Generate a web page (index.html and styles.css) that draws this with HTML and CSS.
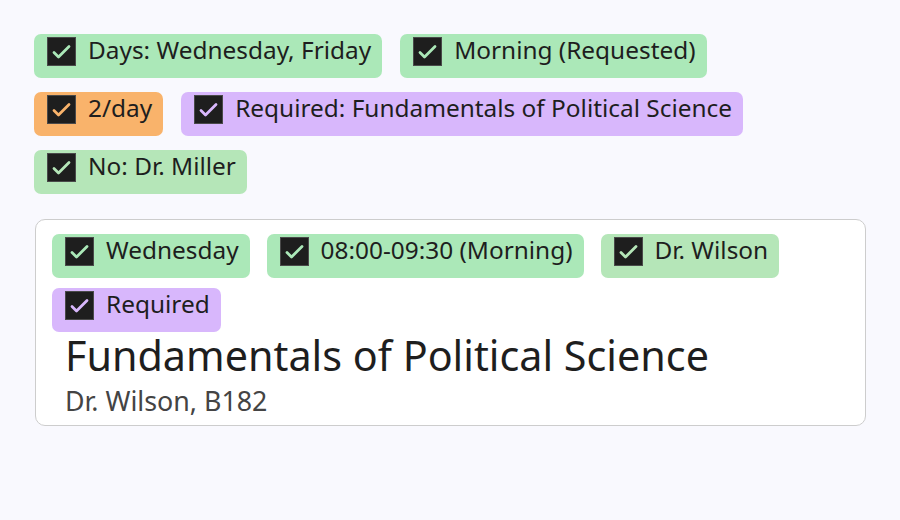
FILE: index.html
```html
<!DOCTYPE html>
<html>
<head>
<meta charset="utf-8">
<link rel="stylesheet" href="styles.css">
</head>
<body>
<div class="page">
  <div class="chips outer">
    <span class="chip green"><svg class="box" viewBox="0 0 29 29"><rect x="0.5" y="0.5" width="28" height="28"/><path d="M7 15.5 L11.5 20 L22 9.5"/></svg><span class="label">Days: Wednesday, Friday</span></span>
    <span class="chip green"><svg class="box" viewBox="0 0 29 29"><rect x="0.5" y="0.5" width="28" height="28"/><path d="M7 15.5 L11.5 20 L22 9.5"/></svg><span class="label">Morning (Requested)</span></span>
    <span class="chip orange"><svg class="box" viewBox="0 0 29 29"><rect x="0.5" y="0.5" width="28" height="28"/><path d="M7 15.5 L11.5 20 L22 9.5"/></svg><span class="label">2/day</span></span>
    <span class="chip purple"><svg class="box" viewBox="0 0 29 29"><rect x="0.5" y="0.5" width="28" height="28"/><path d="M7 15.5 L11.5 20 L22 9.5"/></svg><span class="label">Required: Fundamentals of Political Science</span></span>
    <span class="chip green2"><svg class="box" viewBox="0 0 29 29"><rect x="0.5" y="0.5" width="28" height="28"/><path d="M7 15.5 L11.5 20 L22 9.5"/></svg><span class="label">No: Dr. Miller</span></span>
  </div>
  <div class="card">
    <div class="chips inner">
      <span class="chip green"><svg class="box" viewBox="0 0 29 29"><rect x="0.5" y="0.5" width="28" height="28"/><path d="M7 15.5 L11.5 20 L22 9.5"/></svg><span class="label">Wednesday</span></span>
      <span class="chip green"><svg class="box" viewBox="0 0 29 29"><rect x="0.5" y="0.5" width="28" height="28"/><path d="M7 15.5 L11.5 20 L22 9.5"/></svg><span class="label">08:00-09:30 (Morning)</span></span>
      <span class="chip green2"><svg class="box" viewBox="0 0 29 29"><rect x="0.5" y="0.5" width="28" height="28"/><path d="M7 15.5 L11.5 20 L22 9.5"/></svg><span class="label">Dr. Wilson</span></span>
      <span class="chip purple"><svg class="box" viewBox="0 0 29 29"><rect x="0.5" y="0.5" width="28" height="28"/><path d="M7 15.5 L11.5 20 L22 9.5"/></svg><span class="label">Required</span></span>
    </div>
    <div class="course">
      <div class="title">Fundamentals of Political Science</div>
      <div class="sub">Dr. Wilson, B182</div>
    </div>
  </div>
</div>
</body>
</html>
```
FILE: styles.css
```css
html, body {
  margin: 0;
  padding: 0;
  background: #f9f9fe;
}
body {
  font-family: "Noto Sans", "Open Sans", sans-serif;
  color: #1e1e1e;
}
.page {
  padding: 34px 34px 0 34px;
  width: 832px;
}
.chips {
  display: flex;
  flex-wrap: wrap;
  column-gap: 18px;
  row-gap: 14px;
}
.chips.outer {
  width: 770px;
}
.chip {
  display: inline-flex;
  align-items: flex-start;
  height: 44px;
  box-sizing: border-box;
  padding: 3px 11px 0 13px;
  border-radius: 7px;
  gap: 12px;
}
.box {
  width: 29px;
  height: 29px;
  flex: none;
}
.box rect {
  fill: #1e1e1e;
  stroke: #4a4a4a;
  stroke-width: 1;
}
.box path {
  fill: none;
  stroke-width: 2.8;
  stroke-linecap: round;
  stroke-linejoin: round;
}
.label {
  font-size: 24.4px;
  line-height: 25px;
  white-space: nowrap;
}
.green { background: #abe8b8; }
.green .box path { stroke: #abe8b8; }
.green2 { background: #b5e6b8; }
.green2 .box path { stroke: #b5e6b8; }
.orange { background: #f9b36b; }
.orange .box path { stroke: #f9b36b; }
.purple { background: #d8b7fc; }
.purple .box path { stroke: #d8b7fc; }
.card {
  margin-top: 25px;
  margin-left: 1px;
  width: 831px;
  box-sizing: border-box;
  background: #ffffff;
  border: 1.5px solid #cdcdcd;
  border-radius: 10px;
  padding: 14px 16px 4px 16px;
}
.chips.inner {
  column-gap: 17px;
  row-gap: 10px;
}
.course {
  padding-left: 13px;
  margin-top: 0;
}
.title {
  font-size: 41.3px;
  line-height: 46px;
  color: #1e1e1e;
  white-space: nowrap;
}
.sub {
  margin-top: 3px;
  font-size: 26.8px;
  line-height: 40px;
  color: #444;
  white-space: nowrap;
}
```
